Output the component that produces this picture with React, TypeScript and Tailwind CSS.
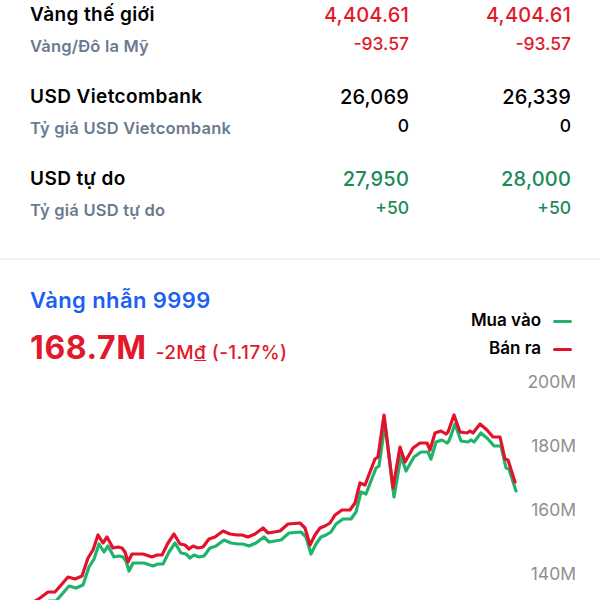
import React from "react";

const red: [number, number][] = [
  [0, 625], [20, 612], [32, 603], [40, 598], [48, 592], [55, 592], [62, 584], [68, 577], [75, 579], [82, 576],
  [88, 558], [93, 550], [98, 535], [103, 543], [107, 537], [113, 548], [118, 547], [122, 548], [125, 552],
  [128, 562], [132, 554], [143, 554], [152, 557], [157, 555], [162, 555], [168, 543], [174, 534], [180, 544],
  [185, 545], [189, 549], [193, 546], [198, 548], [203, 547], [209, 539], [215, 537], [223, 531], [230, 534],
  [237, 535], [242, 535], [248, 537], [255, 534], [263, 528], [268, 533], [280, 531], [288, 524], [300, 523],
  [305, 528], [310, 545], [315, 535], [320, 528], [325, 526], [330, 523], [335, 515], [342, 510], [350, 510],
  [355, 503], [360, 483], [365, 485], [370, 472], [375, 459], [378, 457], [384, 415], [393, 488], [400, 447],
  [405, 462], [413, 448], [420, 443], [427, 443], [430, 450], [435, 433], [441, 431], [446, 434], [448, 432],
  [454, 415], [460, 432], [467, 433], [470, 431], [473, 433], [480, 424], [487, 430], [493, 437], [500, 437],
  [505, 459], [508, 460], [515, 482],
];

const TOP = 366;
const toPts = (arr: [number, number][], dx: number, dy: number) =>
  arr.map(([x, y]) => `${x + dx},${y - TOP + dy}`).join(" ");

function Row({
  title,
  sub,
  v1,
  v2,
  c1,
  c2,
  color,
}: {
  title: string;
  sub: string;
  v1: string;
  v2: string;
  c1: string;
  c2: string;
  color: string;
}) {
  return (
    <div className="flex items-start">
      <div className="flex-1">
        <div className="text-[19px] leading-[24px] font-semibold tracking-[0.4px] text-black">{title}</div>
        <div className="mt-[8px] text-[16.5px] leading-[22px] font-semibold tracking-[0.2px] text-[#6b7a8f]">
          {sub}
        </div>
      </div>
      <div className={`w-[140px] text-right ${color}`}>
        <div className="text-[20px] leading-[24px] font-medium tracking-[0.2px]">{v1}</div>
        <div className="mt-[6px] text-[17.5px] leading-[22px] font-medium">{c1}</div>
      </div>
      <div className={`w-[162px] text-right ${color}`}>
        <div className="text-[20px] leading-[24px] font-medium tracking-[0.2px]">{v2}</div>
        <div className="mt-[6px] text-[17.5px] leading-[22px] font-medium">{c2}</div>
      </div>
    </div>
  );
}

export default function App() {
  return (
    <div
      className="w-[600px] h-[600px] overflow-hidden bg-white"
      style={{ fontFamily: "Inter, 'Noto Sans', sans-serif" }}
    >
      <div className="pl-[30px] pr-[29px] pt-[3px] flex flex-col gap-[28px]">
        <Row
          title="Vàng thế giới"
          sub="Vàng/Đô la Mỹ"
          v1="4,404.61"
          v2="4,404.61"
          c1="-93.57"
          c2="-93.57"
          color="text-[#e1192b]"
        />
        <Row
          title="USD Vietcombank"
          sub="Tỷ giá USD Vietcombank"
          v1="26,069"
          v2="26,339"
          c1="0"
          c2="0"
          color="text-black"
        />
        <Row
          title="USD tự do"
          sub="Tỷ giá USD tự do"
          v1="27,950"
          v2="28,000"
          c1="+50"
          c2="+50"
          color="text-[#1a8a57]"
        />
      </div>
      <div className="mt-[37px] h-[2px] bg-[#eeeff1]" />
      <div className="pl-[30px] pr-[28px] pt-[26px] flex justify-between">
        <div>
          <div className="text-[22px] leading-[28px] font-semibold tracking-[0.4px] text-[#1d5ff0]">
            Vàng nhẫn 9999
          </div>
          <div className="mt-[16px] h-[36px] flex items-baseline gap-[9px] text-[#e1192b]">
            <span className="text-[32px] leading-[36px] font-bold tracking-[0.6px]">168.7M</span>
            <span className="text-[19px] font-medium tracking-[0.4px]">
              -2M<span className="underline">đ</span> (-1.17%)
            </span>
          </div>
        </div>
        <div className="mt-[24px] flex flex-col items-end gap-[6px]">
          <div className="flex items-center gap-[12px] h-[22px]">
            <span className="text-[17px] font-semibold text-black">Mua vào</span>
            <span className="w-[19px] h-[3px] rounded-full bg-[#1fb36c]" />
          </div>
          <div className="flex items-center gap-[12px] h-[22px]">
            <span className="text-[17px] font-semibold text-black">Bán ra</span>
            <span className="w-[19px] h-[3px] rounded-full bg-[#e3122a]" />
          </div>
        </div>
      </div>
      <div className="flex">
        <svg width="520" height="260" viewBox="0 0 520 260" className="shrink-0">
          <polyline
            points={toPts(red, 1, 9)}
            fill="none"
            stroke="#1fb36c"
            strokeWidth="3.2"
            strokeLinejoin="round"
            strokeLinecap="round"
          />
          <polyline
            points={toPts(red, 0, 0)}
            fill="none"
            stroke="#e3122a"
            strokeWidth="3.2"
            strokeLinejoin="round"
            strokeLinecap="round"
          />
        </svg>
        <div className="flex-1 pr-[24px] flex flex-col items-end gap-[32px] text-[17.5px] text-[#8e8e93]">
          <div className="h-[32px] leading-[32px]">200M</div>
          <div className="h-[32px] leading-[32px]">180M</div>
          <div className="h-[32px] leading-[32px]">160M</div>
          <div className="h-[32px] leading-[32px]">140M</div>
        </div>
      </div>
    </div>
  );
}
